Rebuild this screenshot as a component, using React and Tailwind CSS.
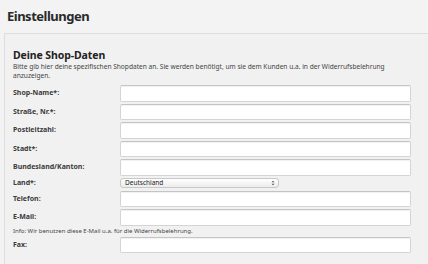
import React from "react";

const fields = [
  "Shop-Name*:",
  "Straße, Nr.*:",
  "Postleitzahl:",
  "Stadt*:",
  "Bundesland/Kanton:",
];

function TextRow({ label }) {
  return (
    <div className="flex items-center">
      <label className="w-[107px] shrink-0 text-[7px] font-bold text-[#3a3a3a]">{label}</label>
      <input
        type="text"
        className="h-[16.5px] w-[291px] shrink-0 rounded-[2px] border border-[#d4d4d4] border-t-[#c4c4c4] bg-white shadow-[inset_0_1px_1px_rgba(0,0,0,0.06)] outline-none"
      />
    </div>
  );
}

export default function App() {
  return (
    <div className="h-[264px] w-[428px] overflow-hidden bg-[#f3f3f3] font-['Noto_Sans','DejaVu_Sans',sans-serif] text-[#333]">
      {/* Header */}
      <header className="h-[33px] pl-[7px] pt-[7px]">
        <h1 className="text-[13px] font-bold leading-[18px] tracking-[-0.5px] text-[#2a2a2a]">Einstellungen</h1>
      </header>
      <div className="ml-[4px] h-[258px] border-l border-t border-[#dedede] bg-[#f1f1f1] pl-[8px] pt-[15px]">
        <h2 className="text-[10.5px] font-bold leading-[13px] tracking-[-0.1px] text-[#222]">Deine Shop-Daten</h2>
        <p className="w-[400px] text-[6.6px] leading-[9px] text-[#444]">
          Bitte gib hier deine spezifischen Shopdaten an. Sie werden benötigt, um sie dem Kunden u.a. in der Widerrufsbelehrung anzuzeigen.
        </p>

        <div className="mt-[5px] flex flex-col gap-[2.1px]">
          {fields.map((f) => (
            <TextRow key={f} label={f} />
          ))}
          <div className="flex items-center">
            <label className="w-[107px] shrink-0 text-[7px] font-bold text-[#3a3a3a]">Land*:</label>
            <div className="flex h-[10px] w-[159px] shrink-0 items-center justify-between rounded-[3px] border border-[#c8c8c8] bg-gradient-to-b from-white to-[#ececec] pl-[4px] pr-[3px]">
              <span className="text-[6.5px] leading-none text-[#222]">Deutschland</span>
              <svg width="4" height="6" viewBox="0 0 4 6">
                <path d="M0.5 2.3 L2 0.8 L3.5 2.3 Z M0.5 3.7 L2 5.2 L3.5 3.7 Z" fill="#555" />
              </svg>
            </div>
          </div>
          <TextRow label="Telefon:" />
          <TextRow label="E-Mail:" />
          <p className="h-[7px] text-[6px] leading-[7px] text-[#444]">
            Info: Wir benutzen diese E-Mail u.a. für die Widerrufsbelehrung.
          </p>
          <TextRow label="Fax:" />
        </div>
      </div>
    </div>
  );
}
